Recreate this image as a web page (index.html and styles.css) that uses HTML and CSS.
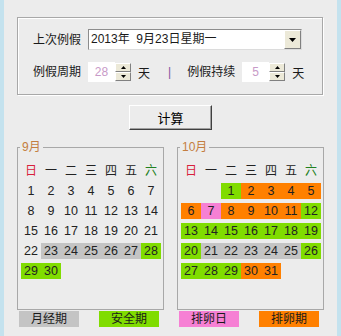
FILE: index.html
```html
<!DOCTYPE html>
<html>
<head>
    <title>例假计算</title>
    <link rel="stylesheet" href="styles.css">
</head>
<body>
    <div class="window">
        <div class="settings">
            <div class="row row-date">
                <span class="label">上次例假</span>
                <div class="combo">
                    <span class="combo-text">2013年&nbsp;&nbsp;9月23日星期一</span>
                    <span class="combo-btn">
                        <svg width="7" height="4" viewBox="0 0 7 4"><path d="M0 0h7L3.5 4z" fill="#000"/></svg>
                    </span>
                </div>
            </div>
            <div class="row row-period">
                <span class="label">例假周期</span>
                <span class="num">28</span>
                <span class="spin">
                    <span class="spin-btn"><svg width="5" height="3" viewBox="0 0 5 3"><path d="M2.5 0L5 3H0z" fill="#000"/></svg></span>
                    <span class="spin-btn"><svg width="5" height="3" viewBox="0 0 5 3"><path d="M0 0h5L2.5 3z" fill="#000"/></svg></span>
                </span>
                <span class="unit">天</span>
                <span class="divider">|</span>
                <span class="label">例假持续</span>
                <span class="num">5</span>
                <span class="spin">
                    <span class="spin-btn"><svg width="5" height="3" viewBox="0 0 5 3"><path d="M2.5 0L5 3H0z" fill="#000"/></svg></span>
                    <span class="spin-btn"><svg width="5" height="3" viewBox="0 0 5 3"><path d="M0 0h5L2.5 3z" fill="#000"/></svg></span>
                </span>
                <span class="unit">天</span>
            </div>
        </div>

        <div class="actions">
            <button class="btn">计算</button>
        </div>

        <div class="cals">
            <fieldset class="cal">
                <legend>9月</legend>
                <div class="days">
                    <span class="wd sun">日</span><span class="wd">一</span><span class="wd">二</span><span class="wd">三</span><span class="wd">四</span><span class="wd">五</span><span class="wd sat">六</span>
                    <span>1</span><span>2</span><span>3</span><span>4</span><span>5</span><span>6</span><span>7</span>
                    <span>8</span><span>9</span><span>10</span><span>11</span><span>12</span><span>13</span><span>14</span>
                    <span>15</span><span>16</span><span>17</span><span>18</span><span>19</span><span>20</span><span>21</span>
                    <span>22</span><span class="m">23</span><span class="m">24</span><span class="m">25</span><span class="m">26</span><span class="m">27</span><span class="g">28</span>
                    <span class="g">29</span><span class="g">30</span>
                </div>
            </fieldset>
            <fieldset class="cal">
                <legend>10月</legend>
                <div class="days">
                    <span class="wd sun">日</span><span class="wd">一</span><span class="wd">二</span><span class="wd">三</span><span class="wd">四</span><span class="wd">五</span><span class="wd sat">六</span>
                    <span class="g first-tue">1</span><span class="o">2</span><span class="o">3</span><span class="o">4</span><span class="o">5</span>
                    <span class="o">6</span><span class="p">7</span><span class="o">8</span><span class="o">9</span><span class="o">10</span><span class="o">11</span><span class="g">12</span>
                    <span class="g">13</span><span class="g">14</span><span class="g">15</span><span class="g">16</span><span class="g">17</span><span class="g">18</span><span class="g">19</span>
                    <span class="g">20</span><span class="m">21</span><span class="m">22</span><span class="m">23</span><span class="m">24</span><span class="m">25</span><span class="g">26</span>
                    <span class="g">27</span><span class="g">28</span><span class="g">29</span><span class="o">30</span><span class="o">31</span>
                </div>
            </fieldset>
        </div>

        <div class="keys">
            <span class="key m">月经期</span>
            <span class="key g">安全期</span>
            <span class="key p">排卵日</span>
            <span class="key o">排卵期</span>
        </div>
    </div>
</body>
</html>
```

FILE: styles.css
```css
* {
    box-sizing: border-box;
}
body {
    margin: 0;
    font-family: "Liberation Sans", "Noto Sans CJK SC", sans-serif;
    font-size: 12px;
    color: #1a1a1a;
    background-color: #ececec;
}
.window {
    width: 341px;
    height: 336px;
    padding-top: 17px;
    background: #ececec;
    border-left: 4px solid #c4e2ee;
    border-right: 4px solid #c4e2ee;
}

/* top settings group */
.settings {
    height: 78px;
    margin: 0 14px 0 13px;
    padding: 11px 0 0 15px;
    border: 1px solid #a8a8a8;
    box-shadow: inset 1px 1px 0 #fff, 1px 1px 0 #fff;
}
.row {
    display: flex;
    align-items: center;
}
.row-date {
    height: 21px;
}
.row-period {
    height: 20px;
    margin-top: 12px;
}
.label {
    width: 48px;
    margin-right: 7px;
    line-height: 16px;
    white-space: nowrap;
}
.combo {
    display: flex;
    width: 214px;
    height: 21px;
    background: #fff;
    border: 1px solid;
    border-color: #8c8c8c #dcdcdc #dcdcdc #8c8c8c;
}
.combo-text {
    flex: 1;
    padding-left: 2px;
    line-height: 19px;
    white-space: nowrap;
}
.combo-btn {
    display: flex;
    align-items: center;
    justify-content: center;
    width: 17px;
    background: #ece9d8;
    border: 1px solid;
    border-color: #fff #808080 #808080 #fff;
}
.num {
    width: 27px;
    height: 20px;
    background: #fff;
    color: #c89ac8;
    text-align: center;
    line-height: 20px;
}
.spin {
    display: flex;
    flex-direction: column;
    width: 16px;
    height: 18px;
}
.spin-btn {
    flex: 1;
    display: flex;
    align-items: center;
    justify-content: center;
    background: #ece9d8;
    border: 1px solid;
    border-color: #fff #808080 #808080 #fff;
}
.unit {
    margin-left: 7px;
}
.divider {
    margin: 0 16px 0 18px;
    color: #8050a0;
}

/* calculate button */
.actions {
    display: flex;
    justify-content: center;
    margin-top: 10px;
}
.btn {
    width: 83px;
    height: 25px;
    padding: 0;
    font-family: inherit;
    font-size: 13px;
    color: #000;
    background: #ececec;
    border: 1px solid;
    border-color: #fff #404040 #404040 #fff;
    box-shadow: inset -1px -1px 0 #a0a0a0;
}

/* calendars */
.cals {
    display: flex;
    gap: 13px;
    margin: 9px 0 0 13px;
}
.cal {
    width: 147px;
    min-width: 0;
    margin: 0;
    padding: 8px 3px 30px 3px;
    border: 1px solid #a8a8a8;
}
.cal legend {
    padding: 0 2px;
    margin-left: -1px;
    line-height: 16px;
    color: #c47e40;
}
.days {
    display: grid;
    grid-template-columns: repeat(7, 20px);
    grid-auto-rows: 16px;
    row-gap: 4px;
}
.days span {
    text-align: center;
    line-height: 16px;
    font-size: 12.5px;
    color: #222;
}
.days .wd {
    font-size: 12px;
}
.days .sun {
    color: #d8203c;
}
.days .sat {
    color: #208020;
}
.days .first-tue {
    grid-column-start: 3;
}

/* day states */
.g {
    background: #80dc00;
}
.o {
    background: #ff8000;
}
.p {
    background: #f680d4;
}
.m {
    background: #c4c4c4;
}

/* legend row */
.keys {
    display: flex;
    gap: 20px;
    margin: 1px 0 0 15px;
}
.key {
    width: 60px;
    height: 16px;
    line-height: 16px;
    text-align: center;
}
```
